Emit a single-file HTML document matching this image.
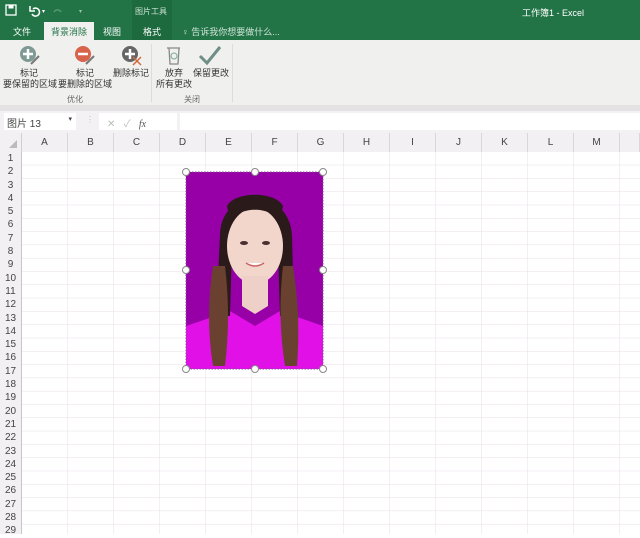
<!DOCTYPE html>
<html><head><meta charset="utf-8"><style>
*{margin:0;padding:0;box-sizing:border-box}
body{width:640px;height:534px;overflow:hidden;background:#fff;font-family:"Liberation Sans","Noto Sans CJK SC",sans-serif;position:relative}
.abs{position:absolute}
#title{left:0;top:0;width:640px;height:40px;background:#227447}
.t{color:#fff;font-size:9px;position:absolute;white-space:nowrap}
#ribbon{left:0;top:40px;width:640px;height:65px;background:#f0f0ef}
.rl{font-size:9px;color:#333;position:absolute;text-align:center;white-space:nowrap;line-height:11px}
.grp{font-size:8px;color:#666;position:absolute}
#band{left:0;top:105px;width:640px;height:6px;background:#e4e2e3}
#fbar{left:0;top:111px;width:640px;height:22px;background:#f3f1f3}
.ch{position:absolute;top:133px;height:19px;font-size:10px;color:#444;text-align:center;line-height:19px;border-right:1px solid #d8d6d8;background:#f2f0f2}
</style></head><body>
<div id="title" class="abs">
 <svg class="abs" style="left:5px;top:4px" width="80" height="14"><rect x="1" y="1" width="10" height="10" fill="none" stroke="#fff" stroke-width="1.3"/><rect x="3.5" y="1" width="5" height="3.5" fill="#fff"/><path d="M28 5 a4 4 0 1 1 -1 5" fill="none" stroke="#fff" stroke-width="1.6"/><path d="M25 2 v5 h5" fill="none" stroke="#fff" stroke-width="1.5"/><text x="37" y="9" fill="#fff" font-size="6">▾</text><path d="M56 8 a4 4 0 0 0 -7 0" fill="none" stroke="#5a9a72" stroke-width="1.4"/><text x="74" y="9" fill="#9bc4aa" font-size="6">▾</text></svg>
 <div class="abs" style="left:132px;top:0;width:40px;height:40px;background:#1c6a3e"></div>
 <div class="t" style="left:135px;top:6px;font-size:8px;color:#cfe3d6">图片工具</div>
 <div class="t" style="left:522px;top:6px">工作簿1 - Excel</div>
 <div class="t" style="left:13px;top:25px">文件</div>
 <div class="abs" style="left:44px;top:22px;width:50px;height:18px;background:#f0f0ef"></div>
 <div class="t" style="left:51px;top:25px;color:#217346">背景消除</div>
 <div class="t" style="left:103px;top:25px">视图</div>
 <div class="t" style="left:143px;top:25px">格式</div>
 <div class="t" style="left:182px;top:25px;color:#cfe3d6">♀ 告诉我你想要做什么...</div>
</div>
<div id="ribbon" class="abs">
 <svg class="abs" style="left:18px;top:4px" width="24" height="24"><circle cx="10" cy="10" r="8" fill="#7f9a94"/><path d="M10 5v10M5 10h10" stroke="#fff" stroke-width="2.5"/><path d="M13 20l8-8" stroke="#777" stroke-width="2"/></svg>
 <svg class="abs" style="left:73px;top:4px" width="24" height="24"><circle cx="10" cy="10" r="8" fill="#d9634a"/><path d="M5 10h10" stroke="#fff" stroke-width="2.5"/><path d="M13 20l8-8" stroke="#777" stroke-width="2"/></svg>
 <svg class="abs" style="left:120px;top:4px" width="24" height="24"><circle cx="10" cy="10" r="8" fill="#666"/><path d="M10 5v10M5 10h10" stroke="#fff" stroke-width="2.5"/><path d="M13 13l8 8M21 13l-8 8" stroke="#d06a3a" stroke-width="1.5"/></svg>
 <svg class="abs" style="left:164px;top:4px" width="20" height="24"><path d="M3 4h13M5 4l1 16h8l1-16" fill="none" stroke="#888" stroke-width="1.3"/><circle cx="10" cy="12" r="3" fill="none" stroke="#7a9" stroke-width="1"/></svg>
 <svg class="abs" style="left:198px;top:4px" width="24" height="22"><path d="M2 12l7 7 13-16" fill="none" stroke="#6f8f86" stroke-width="3"/></svg>
 <div class="rl" style="left:20px;top:28px">标记</div>
 <div class="rl" style="left:3px;top:39px">要保留的区域</div>
 <div class="rl" style="left:76px;top:28px">标记</div>
 <div class="rl" style="left:58px;top:39px">要删除的区域</div>
 <div class="rl" style="left:113px;top:28px">删除标记</div>
 <div class="rl" style="left:165px;top:28px">放弃</div>
 <div class="rl" style="left:156px;top:39px">所有更改</div>
 <div class="rl" style="left:193px;top:28px">保留更改</div>
 <div class="grp" style="left:67px;top:54px">优化</div>
 <div class="grp" style="left:184px;top:54px">关闭</div>
 <div class="abs" style="left:151px;top:4px;width:1px;height:58px;background:#dcdcdc"></div>
 <div class="abs" style="left:232px;top:4px;width:1px;height:58px;background:#dcdcdc"></div>
</div>
<div id="band" class="abs"></div>
<div id="fbar" class="abs">
 <div class="abs" style="left:4px;top:2px;width:72px;height:17px;background:#fff;font-size:10px;color:#444;padding:2px 3px">图片 13<span style="position:absolute;right:4px;top:2px;font-size:7px">▾</span></div>
 <div class="abs" style="left:86px;top:4px;font-size:8px;color:#bbb">⋮</div>
 <div class="abs" style="left:99px;top:2px;width:78px;height:17px;background:#fff;font-size:10px;color:#bbb;padding:2px 8px">✕ &nbsp; ✓ &nbsp; <i style="color:#555;font-family:'Liberation Serif',serif">fx</i></div>
 <div class="abs" style="left:180px;top:2px;width:460px;height:17px;background:#fff"></div>
</div>
<svg class="abs" style="left:0;top:133px" width="640" height="401">
 <defs><pattern id="p" x="22" y="19" width="46" height="13.3" patternUnits="userSpaceOnUse"><rect width="46" height="13.3" fill="#fff"/><path d="M0 13.3H46M46 0V13.3" stroke="#e8dfe5" stroke-width="1"/></pattern></defs>
 <rect x="22" y="19" width="618" height="382" fill="url(#p)"/>
</svg>
<div class="abs" style="left:0;top:133px;width:22px;height:19px;background:#f2f0f2;border-right:1px solid #d0d0d0"><svg width="22" height="19"><path d="M17 7v8h-8z" fill="#bbb"/></svg></div>
<div class="ch" style="left:22px;width:46px">A</div><div class="ch" style="left:68px;width:46px">B</div><div class="ch" style="left:114px;width:46px">C</div><div class="ch" style="left:160px;width:46px">D</div><div class="ch" style="left:206px;width:46px">E</div><div class="ch" style="left:252px;width:46px">F</div><div class="ch" style="left:298px;width:46px">G</div><div class="ch" style="left:344px;width:46px">H</div><div class="ch" style="left:390px;width:46px">I</div><div class="ch" style="left:436px;width:46px">J</div><div class="ch" style="left:482px;width:46px">K</div><div class="ch" style="left:528px;width:46px">L</div><div class="ch" style="left:574px;width:46px">M</div><div class="ch" style="left:620px;width:20px"></div>
<div class="abs" style="left:0;top:152px;width:22px;height:382px;background:#f2f0f2;border-right:1px solid #c8c6c8;font-size:10px;color:#444;text-align:center;line-height:13.3px">1<br>2<br>3<br>4<br>5<br>6<br>7<br>8<br>9<br>10<br>11<br>12<br>13<br>14<br>15<br>16<br>17<br>18<br>19<br>20<br>21<br>22<br>23<br>24<br>25<br>26<br>27<br>28<br>29</div>
<svg class="abs" style="left:180px;top:166px" width="150" height="210">
 <rect x="6" y="6" width="137" height="197" fill="#9600a6"/>
 <path d="M6 160 L50 145 L75 160 L100 145 L143 160 V203 H6Z" fill="#e010e6"/>
 <path d="M40 70 C40 20 110 20 112 70 L114 150 L100 150 L98 80 L52 80 L50 150 L36 150Z" fill="#2a1a1a"/>
 <ellipse cx="75" cy="80" rx="28" ry="38" fill="#f2d6cc"/>
 <path d="M62 110 h26 v30 l-13 8 l-13 -8z" fill="#efd0c8"/>
 <path d="M47 40 C55 25 95 25 103 40 L100 55 C90 40 60 40 50 55Z" fill="#2a1a1a"/>
 <ellipse cx="64" cy="77" rx="4" ry="2" fill="#4a3030"/><ellipse cx="86" cy="77" rx="4" ry="2" fill="#4a3030"/>
 <path d="M66 97 q9 6 18 0" fill="#fff" stroke="#c66" stroke-width="1.5"/>
 <path d="M33 100 q-8 50 0 100 h12 q6 -50 0 -100z" fill="#6a4030"/>
 <path d="M103 100 q-6 50 2 100 h12 q4 -50 -4 -100z" fill="#6a4030"/>
 <rect x="6" y="6" width="137" height="197" fill="none" stroke="#8a4a9a" stroke-dasharray="1.5 1.5"/>
 <g fill="#fff" stroke="#888" stroke-width="1"><circle cx="6" cy="6" r="3.5"/><circle cx="75" cy="6" r="3.5"/><circle cx="143" cy="6" r="3.5"/><circle cx="6" cy="104" r="3.5"/><circle cx="143" cy="104" r="3.5"/><circle cx="6" cy="203" r="3.5"/><circle cx="75" cy="203" r="3.5"/><circle cx="143" cy="203" r="3.5"/></g>
</svg>
</body></html>
